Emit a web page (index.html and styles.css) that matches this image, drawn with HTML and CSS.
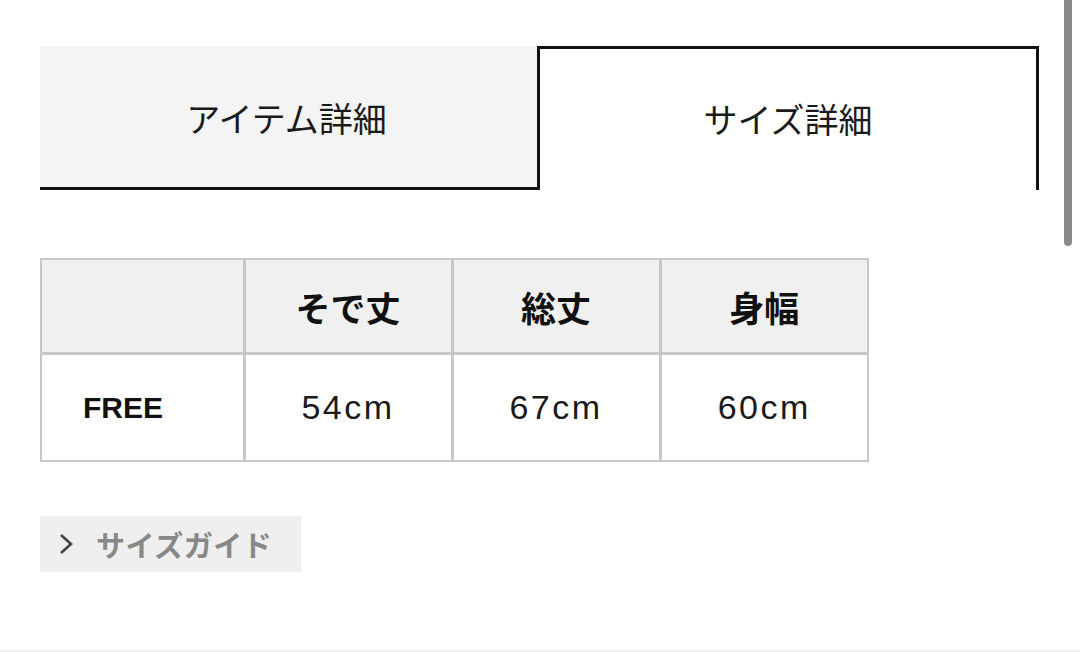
FILE: index.html
```html
<!DOCTYPE html>
<html lang="ja">
<head>
<meta charset="utf-8">
<link rel="stylesheet" href="styles.css">
</head>
<body>
<div class="page">
  <div class="tabs">
    <div class="tab tab-inactive">アイテム詳細</div>
    <div class="tab tab-active">サイズ詳細</div>
  </div>
  <table class="size-table">
    <colgroup>
      <col class="col-first"><col class="col"><col class="col"><col class="col">
    </colgroup>
    <thead>
      <tr><th></th><th>そで丈</th><th>総丈</th><th>身幅</th></tr>
    </thead>
    <tbody>
      <tr><td class="size-name">FREE</td><td class="val">54cm</td><td class="val">67cm</td><td class="val">60cm</td></tr>
    </tbody>
  </table>
  <div class="guide">
    <span class="guide-btn">
      <svg class="chev" width="16" height="24" viewBox="0 0 16 24"><path d="M3 3 L13 12 L3 21" fill="none" stroke="#444" stroke-width="2.6"/></svg>
      <span class="guide-text">サイズガイド</span>
    </span>
  </div>
</div>
<div class="scrollbar"></div>
<div class="bottom-line"></div>
</body>
</html>
```
FILE: styles.css
```css
html, body {
  margin: 0;
  padding: 0;
  background: #fff;
  width: 1080px;
  height: 652px;
  overflow: hidden;
  font-family: "Noto Sans CJK JP", "Liberation Sans", sans-serif;
  color: #111;
}
.page {
  padding: 46px 0 0 40px;
}
.tabs {
  display: flex;
  width: 999px;
  height: 144px;
}
.tab {
  box-sizing: border-box;
  height: 144px;
  display: flex;
  align-items: center;
  justify-content: center;
  font-size: 34px;
  font-weight: 400;
  color: #1a1a1a;
}
.tab-inactive {
  width: 499px;
  background: #f4f4f4;
  border-bottom: 3px solid #111;
  padding-top: 1px;
  padding-right: 6px;
}
.tab-active {
  width: 502px;
  margin-left: -2px;
  background: #fff;
  border: 3px solid #111;
  border-bottom: none;
  padding-bottom: 2px;
}
.size-table {
  margin-top: 68px;
  border-collapse: collapse;
  table-layout: fixed;
  width: 827px;
}
.col-first { width: 203px; }
.col { width: 208px; }
.size-table th, .size-table td {
  border: 3px solid #c8c8c8;
  padding: 0;
  text-align: center;
}
.size-table th {
  background: #f0f0f0;
  height: 92px;
  font-size: 35px;
  font-weight: 700;
  color: #111;
}
.size-table td {
  height: 105px;
  background: #fff;
}
.size-table tr > *:first-child { border-left-width: 2px; }
.size-table tr > *:last-child { border-right-width: 2px; }
.size-table thead th { border-top-width: 2px; }
.size-table tbody td { border-bottom-width: 2px; }
.size-name {
  text-align: left !important;
  padding-left: 41px !important;
  font-family: "Liberation Sans", Arial, sans-serif;
  font-weight: 700;
  font-size: 30px;
  color: #111;
}
.val {
  font-family: "Liberation Sans", Arial, sans-serif;
  font-size: 34px;
  letter-spacing: 2.5px;
  color: #1a1a1a;
}
.guide {
  margin-top: 54px;
}
.guide-btn {
  display: inline-flex;
  align-items: center;
  width: 261px;
  height: 56px;
  box-sizing: border-box;
  background: #efefef;
  padding-left: 18px;
}
.chev {
  display: block;
  margin-right: 22px;
}
.guide-text {
  font-size: 29px;
  font-weight: 700;
  color: #888;
  letter-spacing: 0.5px;
}
.scrollbar {
  position: absolute;
  left: 1064px;
  top: 0;
  width: 8px;
  height: 246px;
  border-radius: 0 0 4px 4px;
  background: #8a8a8a;
}
.bottom-line {
  position: absolute;
  left: 0;
  top: 650px;
  width: 1080px;
  height: 2px;
  background: #eeeeee;
}
```
